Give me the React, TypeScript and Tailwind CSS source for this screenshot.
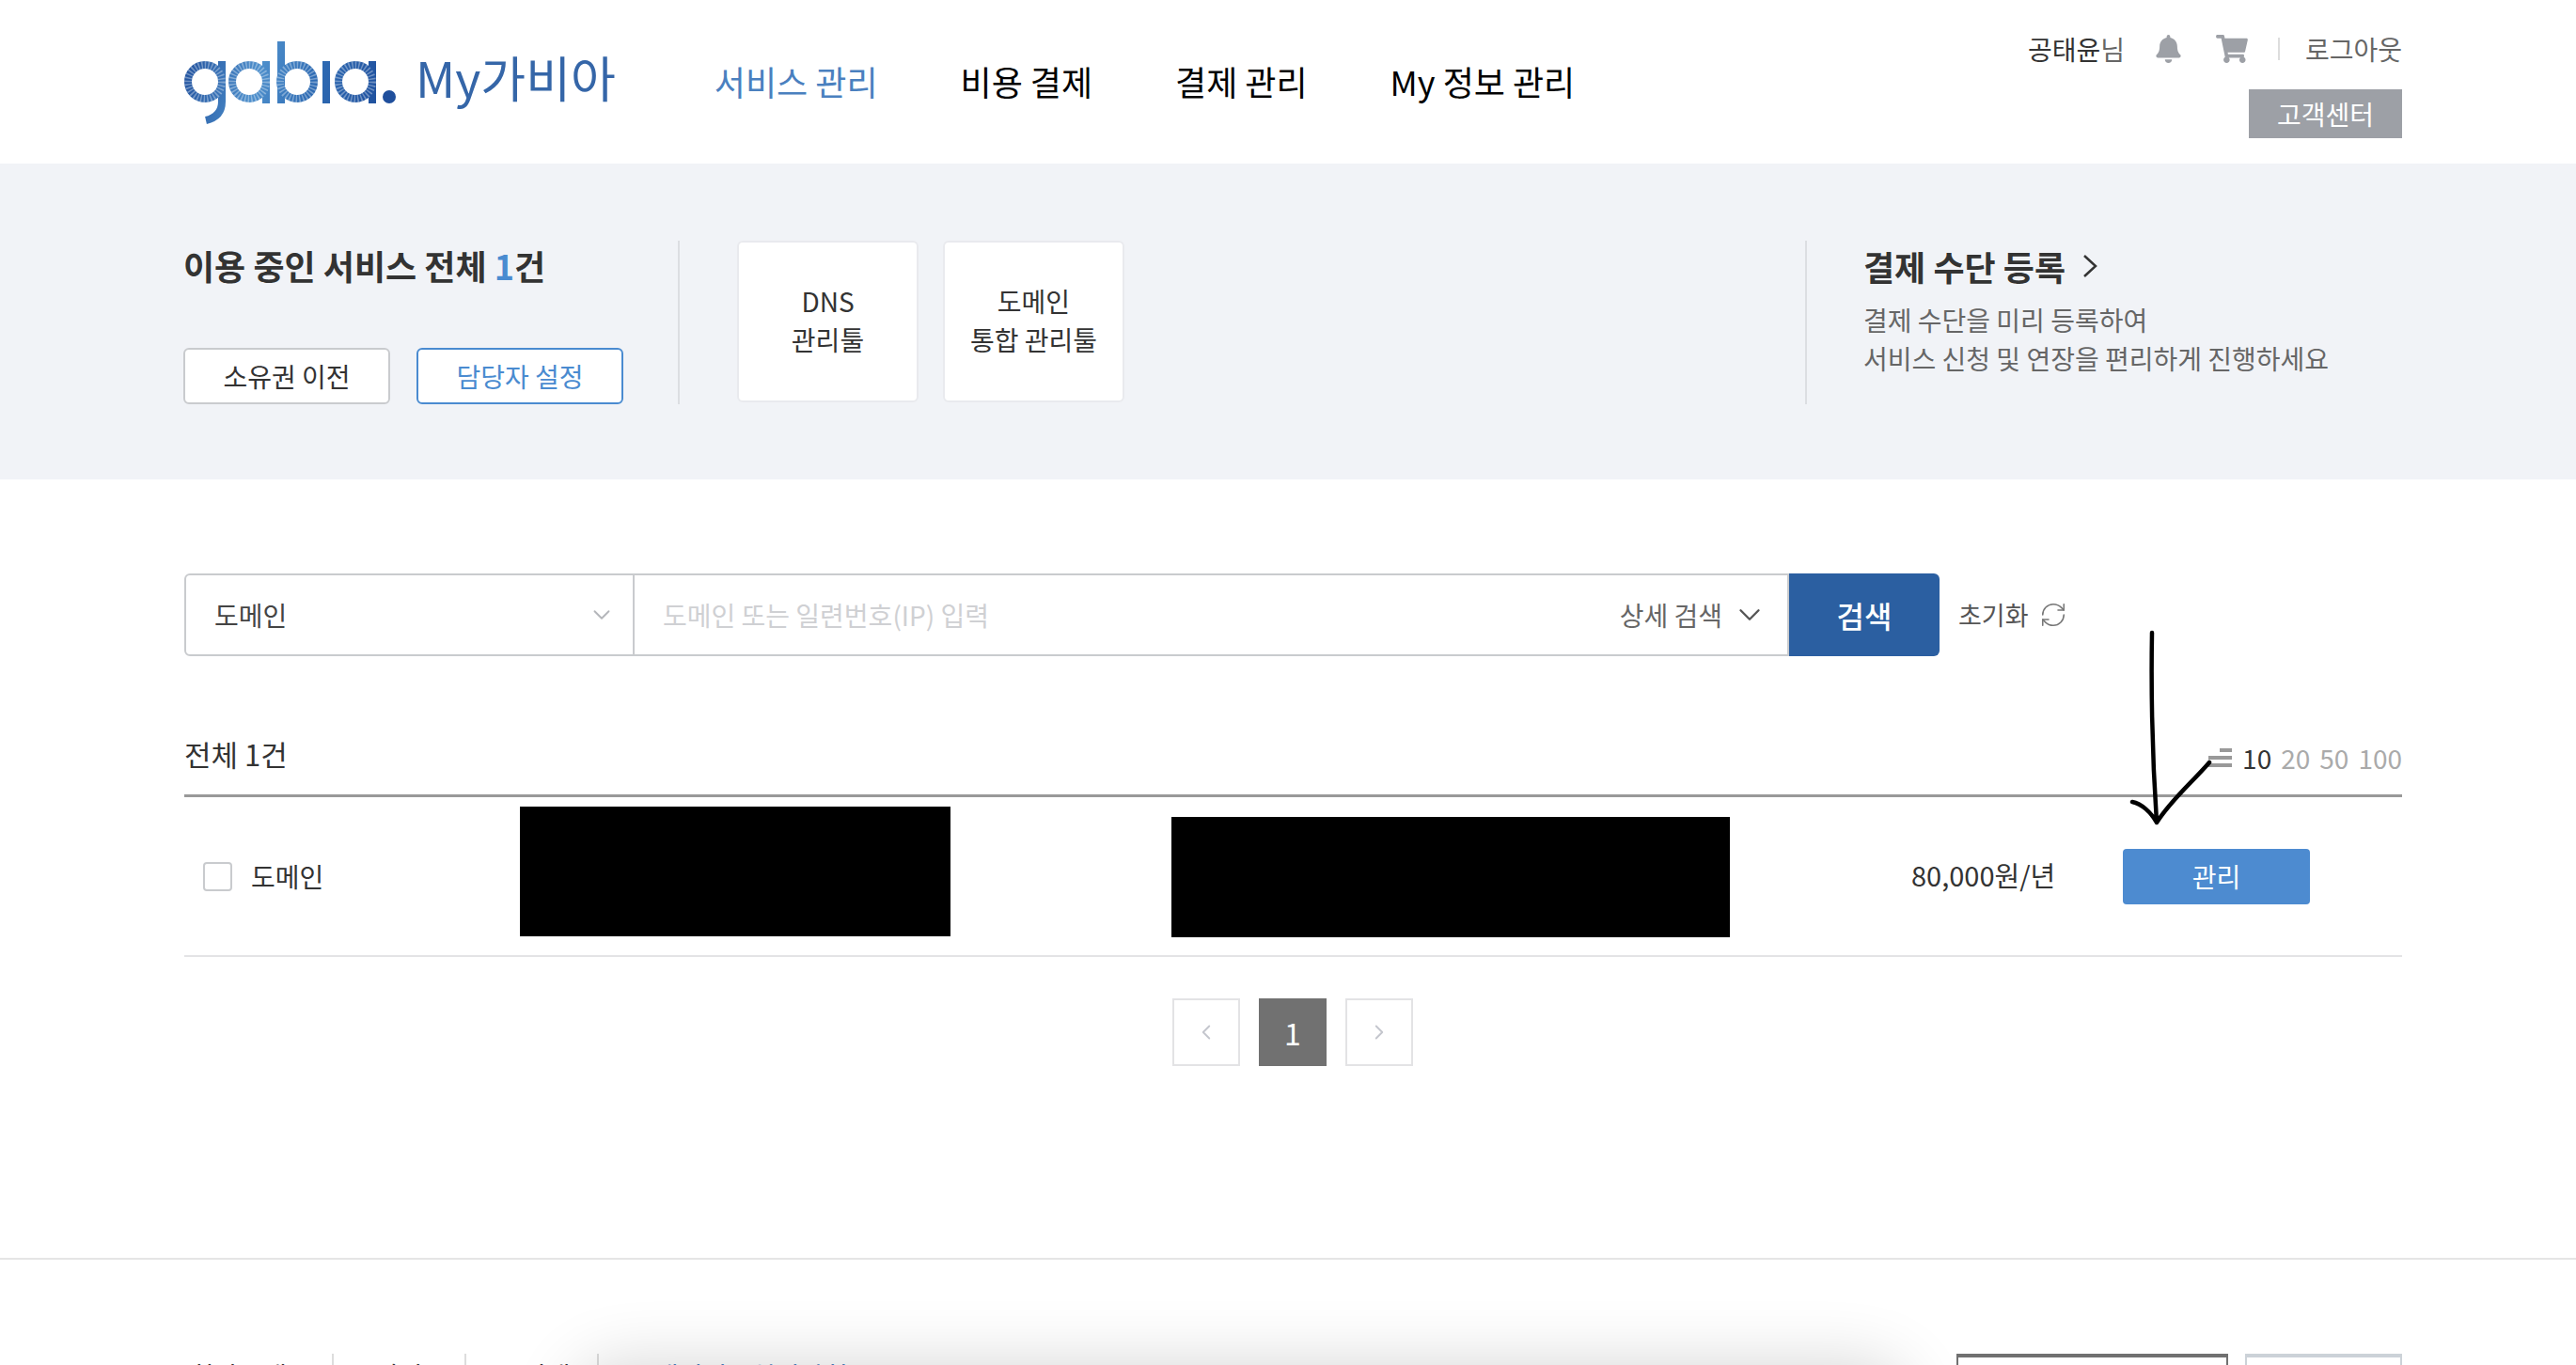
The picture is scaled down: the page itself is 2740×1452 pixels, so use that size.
import { ChevronDown, ChevronRight, ChevronLeft, RefreshCw } from 'lucide-react';
import { FaBell, FaShoppingCart } from 'react-icons/fa';

const font = "font-['Noto_Sans_CJK_KR','Noto_Sans',sans-serif]";

function Logo() {
  return (
    <svg width="232" height="95" viewBox="196 40 232 95" fill="none">
      <defs>
        <linearGradient id="gabiaFill" gradientUnits="userSpaceOnUse" x1="196" y1="60" x2="420" y2="120">
          <stop offset="0%" stopColor="#1f4f9c" />
          <stop offset="35%" stopColor="#4f90cc" />
          <stop offset="60%" stopColor="#2f6cb4" />
          <stop offset="100%" stopColor="#1c4a98" />
        </linearGradient>
      </defs>
      <g stroke="url(#gabiaFill)" strokeWidth="8">
        <circle cx="219" cy="87" r="18" />
        <path d="M237 65V108Q237 124 220 128" />
        <circle cx="266" cy="87" r="18" />
        <path d="M284 65V110" />
        <circle cx="317" cy="87" r="18" />
        <path d="M300 44V110" />
        <path d="M348 65V110" />
        <circle cx="379" cy="87" r="18" />
        <path d="M397 65V110" />
      </g>
      <g stroke="#ffffff" strokeOpacity="0.35" strokeWidth="8" strokeDasharray="1.5 2">
        <circle cx="219" cy="87" r="18" />
        <circle cx="266" cy="87" r="18" />
        <circle cx="317" cy="87" r="18" />
        <circle cx="379" cy="87" r="18" />
      </g>
      <circle cx="415" cy="103" r="7" fill="#1f4f9c" />
    </svg>
  );
}

function HandArrow() {
  return (
    <svg className="absolute left-[2260px] top-[665px]" width="100" height="220" viewBox="2260 665 100 220" fill="none">
      <path
        d="M2289 673C2288 730 2289 800 2294 875M2268 853C2278 855 2288 864 2294 875C2310 850 2332 832 2350 811"
        stroke="#000"
        strokeWidth="4.5"
        strokeLinecap="round"
        strokeLinejoin="round"
      />
    </svg>
  );
}

export default function App() {
  return (
    <div className={`relative h-[1452px] overflow-hidden bg-white ${font}`}>
      {/* header */}
      <header className="flex h-[174px] pl-[195px] pr-[185px]">
        <div className="mt-[40px] flex h-[95px] items-start">
          <Logo />
          <span className="ml-[15px] mt-[9px] text-[52px] leading-[66px] text-[#3566a8]">My가비아</span>
        </div>
        <nav className="ml-[105px] mt-[61px] flex gap-[88px] text-[36px] leading-[50px] text-black">
          <a className="text-[#4a80bf]">서비스 관리</a>
          <a>비용 결제</a>
          <a>결제 관리</a>
          <a>My 정보 관리</a>
        </nav>
        <div className="ml-auto flex flex-col items-end pt-[34px]">
          <div className="flex h-[36px] items-center text-[28px] text-[#666]">
            <span>
              <span className="text-[#333]">공태윤</span>님
            </span>
            <FaBell className="ml-[33px] h-[30px] w-[27px] text-[#9da0a6]" />
            <FaShoppingCart className="ml-[37px] h-[30px] w-[34px] text-[#9da0a6]" />
            <span className="ml-[32px] h-[24px] w-[2px] bg-[#ddd]" />
            <span className="ml-[27px]">로그아웃</span>
          </div>
          <button className="mt-[25px] h-[52px] w-[163px] bg-[#9da0a6] text-[28px] text-white">고객센터</button>
        </div>
      </header>

      {/* summary band */}
      <section className="flex h-[336px] bg-[#f1f3f7] pl-[195px] pr-[185px] pt-[82px]">
        <div className="flex h-[174px] w-[528px] flex-col border-r-2 border-[#dcdee2]">
          <h2 className="mt-[-1px] text-[36px] font-bold leading-[54px] text-[#333]">
            이용 중인 서비스 전체 <span className="text-[#4a8bd0]">1</span>건
          </h2>
          <div className="mt-auto flex gap-[28px]">
            <button className="h-[60px] w-[220px] rounded-[6px] border-2 border-[#c9cbce] bg-white text-[28px] text-[#333]">소유권 이전</button>
            <button className="h-[60px] w-[220px] rounded-[6px] border-2 border-[#4a8bd0] bg-white text-[28px] text-[#4a8bd0]">담당자 설정</button>
          </div>
        </div>
        <div className="ml-[61px] flex gap-[26px] text-center text-[28px] leading-[41px] text-[#333]">
          <div className="flex h-[172px] w-[193px] items-center justify-center rounded-[6px] border-2 border-[#e9eaee] bg-white pb-[2px]">
            <span>DNS<br />관리툴</span>
          </div>
          <div className="flex h-[172px] w-[193px] items-center justify-center rounded-[6px] border-2 border-[#e9eaee] bg-white pb-[2px]">
            <span>도메인<br />통합 관리툴</span>
          </div>
        </div>
        <div className="ml-[724px] flex h-[174px] flex-1 flex-col border-l-2 border-[#dcdee2] pl-[60px]">
          <h3 className="flex items-center text-[36px] font-bold leading-[54px] text-[#333]">
            결제 수단 등록
            <svg className="ml-[18px]" width="16" height="26" viewBox="0 0 16 26" fill="none">
              <path d="M2 2L14 13L2 24" stroke="#333" strokeWidth="2.5" />
            </svg>
          </h3>
          <p className="mt-[10px] text-[28px] leading-[41px] text-[#666]">
            결제 수단을 미리 등록하여<br />서비스 신청 및 연장을 편리하게 진행하세요
          </p>
        </div>
      </section>

      {/* search */}
      <div className="mt-[100px] flex h-[88px] pl-[196px] pr-[185px]">
        <div className="flex w-[479px] items-center justify-between rounded-l-[6px] border-2 border-[#c9cbce] pl-[30px] pr-[18px] text-[28px] text-[#444]">
          도메인
          <ChevronDown className="h-[30px] w-[30px] text-[#b4b6ba]" strokeWidth={1.5} />
        </div>
        <div className="flex w-[1228px] items-center justify-between border-y-2 border-r-2 border-[#c9cbce] pl-[30px] pr-[21px] text-[28px]">
          <span className="text-[#cfd0d3]">도메인 또는 일련번호(IP) 입력</span>
          <span className="flex items-center text-[#666]">
            상세 검색
            <ChevronDown className="ml-[10px] h-[38px] w-[38px] text-[#555]" strokeWidth={1.5} />
          </span>
        </div>
        <button className="h-[88px] w-[160px] rounded-r-[6px] bg-[#2b5fa1] text-[32px] font-medium text-white">검색</button>
        <div className="ml-[20px] flex items-center text-[27px] text-[#555]">
          초기화
          <RefreshCw className="ml-[11px] h-[30px] w-[30px] text-[#777]" strokeWidth={1.25} />
        </div>
      </div>

      {/* list */}
      <div className="mt-[78px] pl-[196px] pr-[185px]">
        <div className="flex h-[72px] items-start justify-between border-b-[3px] border-[#999]">
          <span className="text-[31px] leading-[52px] text-[#333]">전체 1건</span>
          <div className="mt-[10px] flex items-center gap-[10px] text-[28px] leading-[40px] text-[#aaa]">
            <span className="mr-[1px] flex w-[25px] flex-col items-end gap-[4px]">
              <i className="block h-[4px] w-[13px] bg-[#999]" />
              <i className="block h-[4px] w-[25px] bg-[#999]" />
              <i className="block h-[4px] w-[25px] bg-[#999]" />
            </span>
            <span className="text-[#333]">10</span>
            <span>20</span>
            <span>50</span>
            <span>100</span>
          </div>
        </div>
        <div className="flex h-[170px] items-center border-b-2 border-[#e3e3e5] pl-[20px] text-[28px] text-[#333]">
          <span className="h-[31px] w-[31px] rounded-[4px] border-2 border-[#c9cbce]" />
          <span className="ml-[20px] w-[286px]">도메인</span>
          <div className="mb-[11px] h-[138px] w-[458px] bg-black" />
          <div className="ml-[235px] mt-[1px] h-[128px] w-[594px] bg-black" />
          <span className="mb-[2px] ml-[193px] w-[225px] text-[29px]">80,000원/년</span>
          <button className="h-[59px] w-[199px] rounded-[4px] bg-[#4d8bd0] text-[28px] text-white">관리</button>
        </div>
      </div>

      {/* pagination */}
      <div className="mt-[44px] flex justify-center gap-[20px] pl-[10px]">
        <span className="flex h-[72px] w-[72px] items-center justify-center border-2 border-[#e3e3e5]">
          <ChevronLeft className="h-[26px] w-[26px] text-[#c4c6cd]" strokeWidth={1.75} />
        </span>
        <span className="flex h-[72px] w-[72px] items-center justify-center bg-[#717171] text-[32px] text-white">1</span>
        <span className="flex h-[72px] w-[72px] items-center justify-center border-2 border-[#e3e3e5]">
          <ChevronRight className="h-[26px] w-[26px] text-[#c4c6cd]" strokeWidth={1.75} />
        </span>
      </div>

      {/* footer, cut off by the window */}
      <footer className="mt-[204px] border-t-2 border-[#e5e5e5] pl-[196px] pr-[185px] pt-[100px]">
        <div className="flex items-start">
          <div className="flex text-[28px] leading-[40px] text-[#333]">
            <span className="h-[60px] w-[159px] border-r-2 border-[#ddd] pl-[6px] pt-[3px]">회사소개</span>
            <span className="h-[60px] w-[141px] border-r-2 border-[#ddd] pl-[44px] pt-[3px]">약관</span>
            <span className="h-[60px] w-[141px] border-r-2 border-[#ddd] pl-[59px] pt-[3px]">인재</span>
            <span className="pl-[59px] pt-[3px] text-[#4a80bf]">개인정보처리방침</span>
          </div>
          <div className="ml-auto flex gap-[18px]">
            <div className="h-[60px] w-[289px] border-2 border-t-[4px] border-[#717171]" />
            <div className="h-[60px] w-[167px] border-2 border-t-[4px] border-[#ccd2d8]" />
          </div>
        </div>
      </footer>

      {/* popup sitting just under the window, only its shadow shows */}
      <div className="absolute left-[640px] top-[1480px] h-[200px] w-[1360px] rounded-[20px] shadow-[0_0_70px_30px_rgba(0,0,0,0.16)]" />

      <HandArrow />
    </div>
  );
}
